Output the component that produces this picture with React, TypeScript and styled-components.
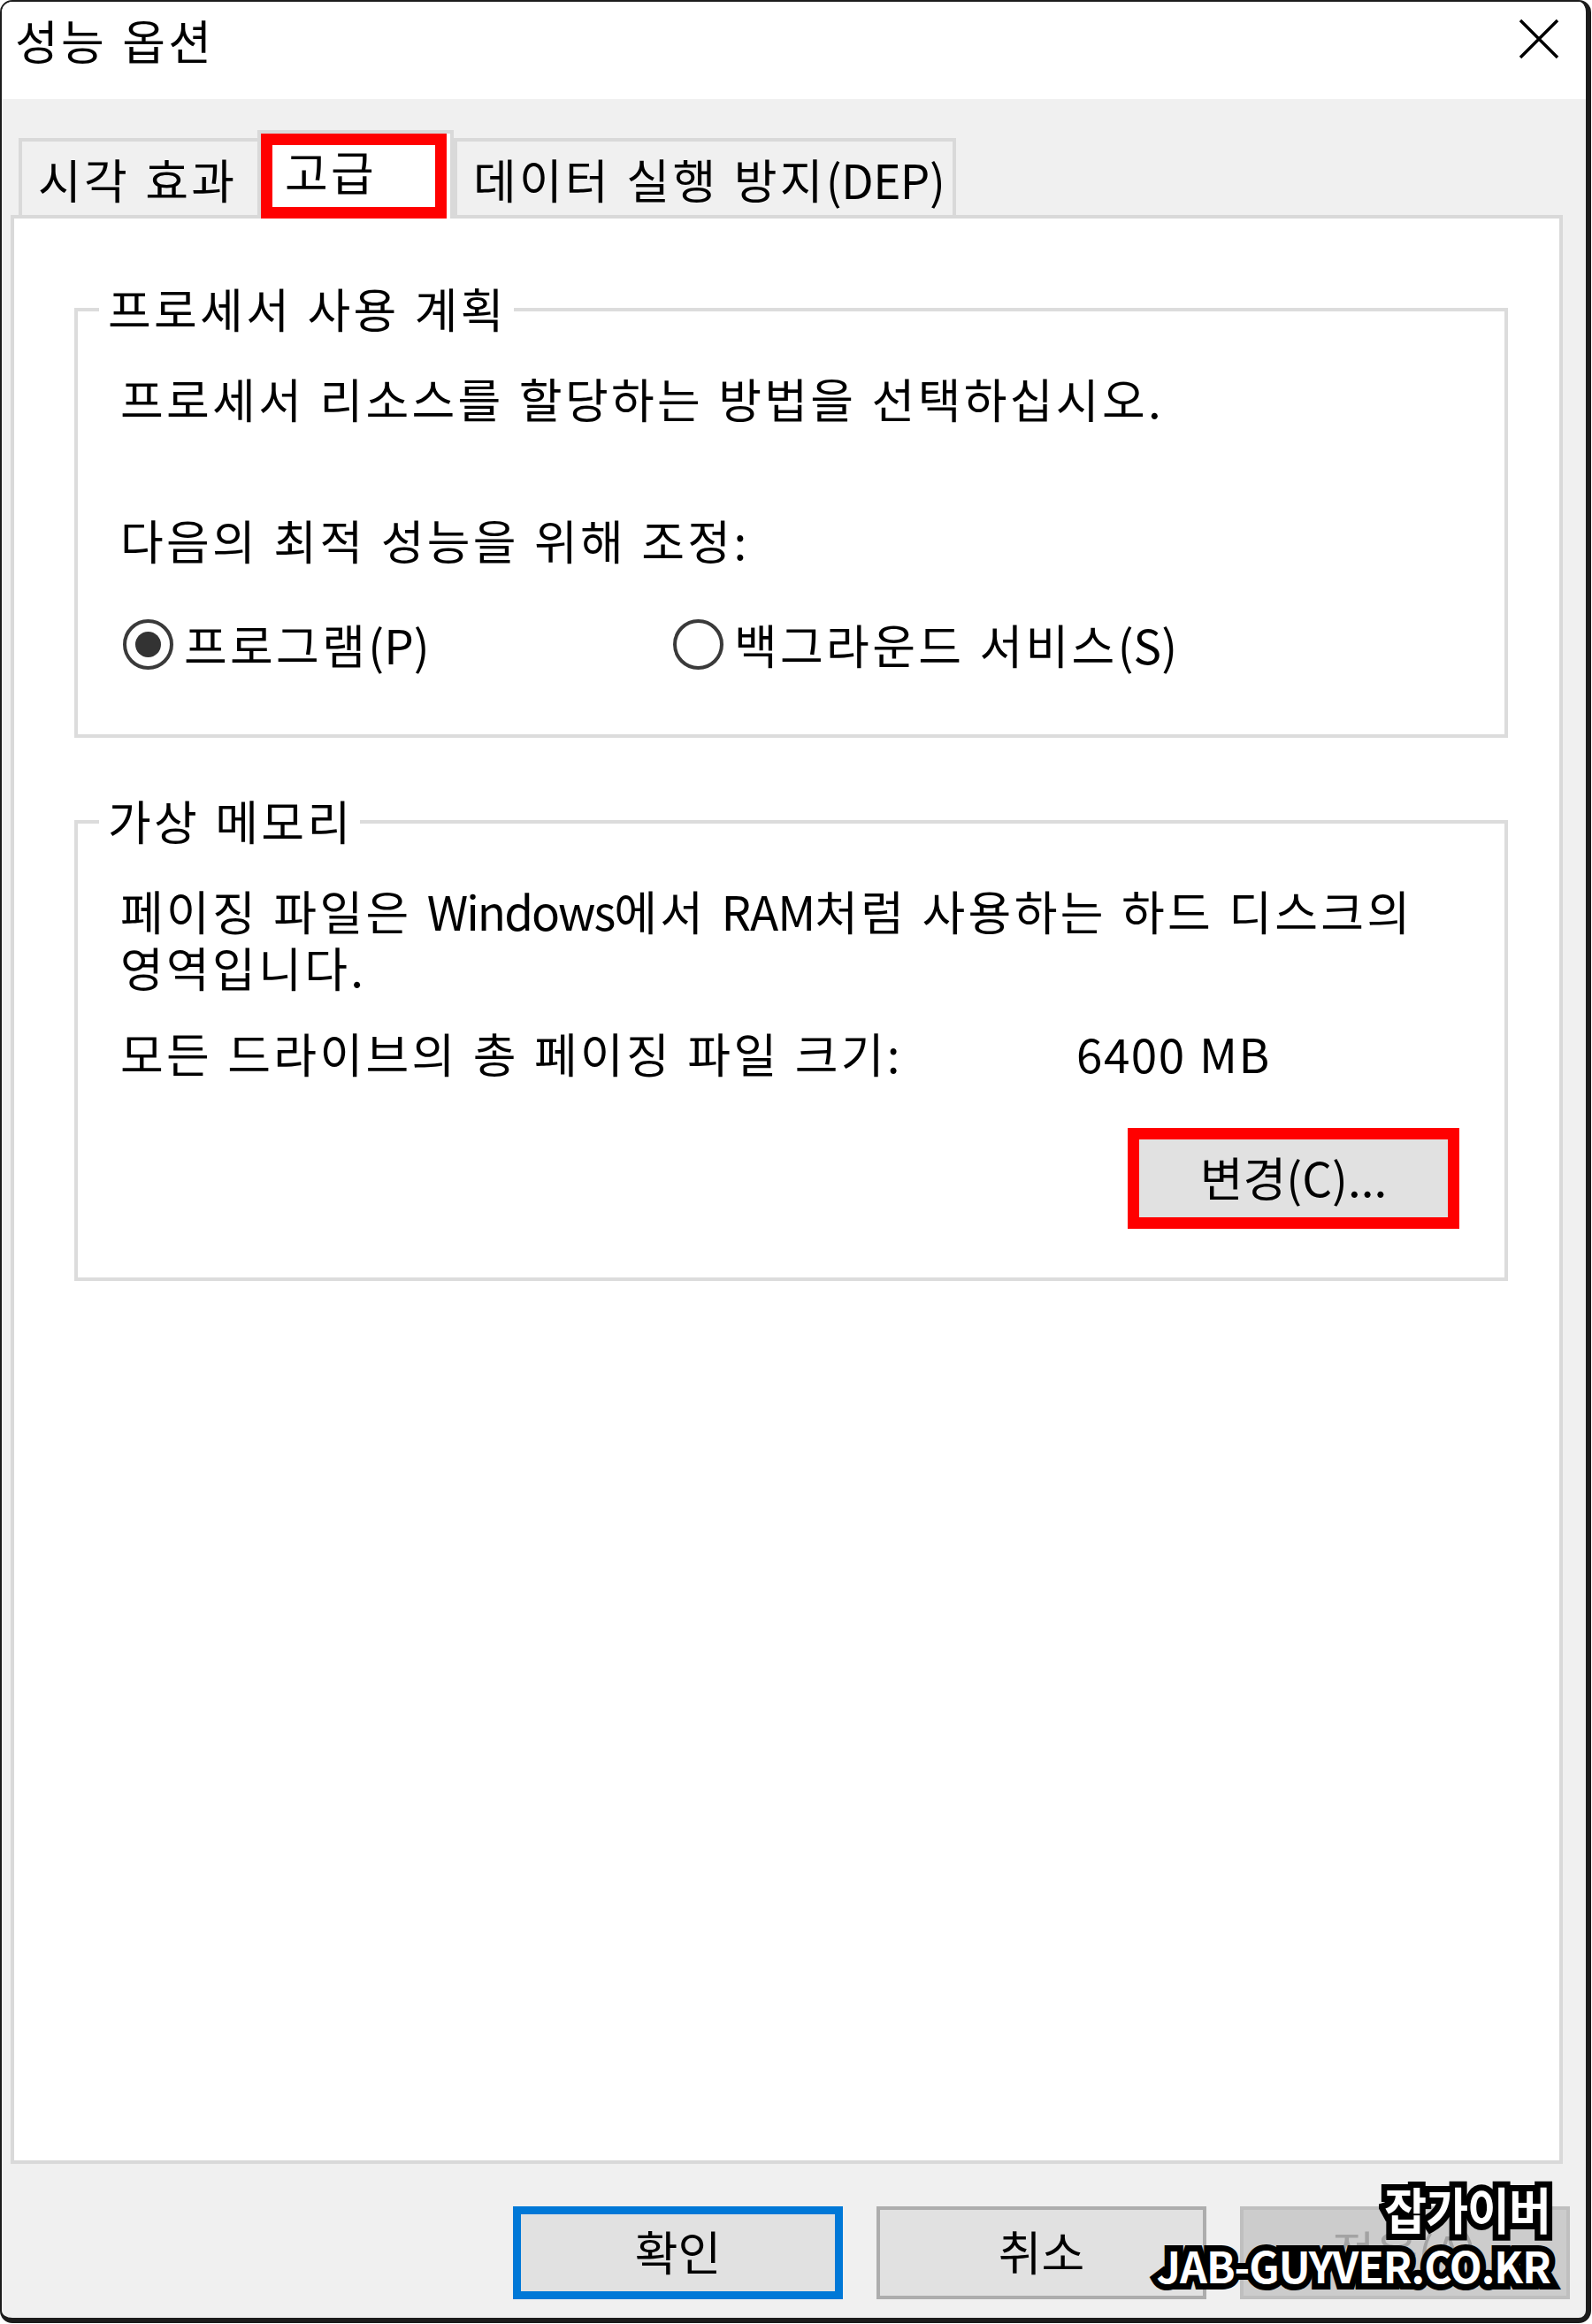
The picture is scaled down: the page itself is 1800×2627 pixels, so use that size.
import React from "react";
import styled, { createGlobalStyle } from "styled-components";

const FONT = `"Noto Sans CJK KR", "Noto Sans", "DejaVu Sans", sans-serif`;

const Global = createGlobalStyle`
  html, body { margin: 0; padding: 0; background: #ffffff; }
  body { font-family: ${FONT}; }
  *, *::before, *::after { box-sizing: border-box; }
`;

const Window = styled.div`
  position: relative;
  width: 1799px;
  height: 2626px;
  display: flex;
  flex-direction: column;
  background: #f0f0f0;
  border: 2px solid #1c1c1c;
  border-right-width: 6px;
  border-bottom-width: 6px;
  border-radius: 14px;
  overflow: hidden;
  font-family: ${FONT};
  font-size: 53px;
  letter-spacing: 3.3px;
  word-spacing: 2px;
  color: #000;
`;

const Latin = styled.span<{ $ls: number }>`
  letter-spacing: ${(p) => p.$ls}px;
`;

const TitleBar = styled.div`
  flex: none;
  height: 110px;
  background: #ffffff;
  display: flex;
  align-items: flex-start;
  justify-content: space-between;
  padding: 0 30px 0 15px;
`;

const Title = styled.div`
  line-height: 86px;
`;

const CloseIcon = styled.svg`
  margin-top: 19px;
  display: block;
`;

const TabStrip = styled.div`
  flex: none;
  height: 131px;
  display: flex;
  align-items: flex-end;
  padding-left: 19px;
  position: relative;
  z-index: 1;
`;

const Tab = styled.div<{ $w: number; $active?: boolean }>`
  position: relative;
  width: ${(p) => p.$w}px;
  height: ${(p) => (p.$active ? 100 : 87)}px;
  margin-left: ${(p) => (p.$active ? -4 : 0)}px;
  margin-bottom: ${(p) => (p.$active ? -4 : 0)}px;
  background: ${(p) => (p.$active ? "#ffffff" : "#f0f0f0")};
  border: 4px solid #d9d9d9;
  border-bottom: none;
  display: flex;
  align-items: center;
  padding-left: ${(p) => (p.$active ? 27 : 18)}px;
  padding-bottom: ${(p) => (p.$active ? 13 : 0)}px;
  white-space: nowrap;
  line-height: 64px;
`;

const Highlight = styled.span<{ $t: number; $r: number; $b: number; $l: number }>`
  position: absolute;
  top: ${(p) => p.$t}px;
  right: ${(p) => p.$r}px;
  bottom: ${(p) => p.$b}px;
  left: ${(p) => p.$l}px;
  border: 13px solid #ff0000;
  pointer-events: none;
`;

const Panel = styled.div`
  flex: 1;
  background: #ffffff;
  border: 4px solid #d9d9d9;
  margin: 0 26px 0 10px;
  padding: 101px 58px 0 68px;
`;

const Group = styled.section<{ $mt?: number }>`
  position: relative;
  border: 4px solid #dcdcdc;
  margin-top: ${(p) => p.$mt ?? 0}px;
  padding: 66px 52px 0 48px;
`;

const Legend = styled.span`
  position: absolute;
  top: -36px;
  left: 24px;
  padding: 0 8px 0 10px;
  background: #ffffff;
  line-height: 64px;
  white-space: nowrap;
`;

const Line = styled.p<{ $mt?: number }>`
  margin: ${(p) => p.$mt ?? 0}px 0 0 0;
  line-height: 64px;
  white-space: nowrap;
`;

const Para = styled.p`
  margin: 0;
  line-height: 64px;
  white-space: nowrap;
`;

const RadioRow = styled.div`
  display: grid;
  grid-template-columns: 622px auto;
  margin-top: 54px;
  height: 64px;
  align-items: center;
  padding-bottom: 70px;
  box-sizing: content-box;
`;

const RadioLabel = styled.label`
  display: flex;
  align-items: center;
  gap: 12px;
  padding-left: 3px;
  line-height: 64px;
  white-space: nowrap;
`;

const RadioCircle = styled.span<{ $checked?: boolean }>`
  flex: none;
  width: 57px;
  height: 57px;
  border-radius: 50%;
  border: 4px solid #3a3a3a;
  background: #ffffff;
  display: inline-flex;
  align-items: center;
  justify-content: center;
  &::after {
    content: "";
    width: 29px;
    height: 29px;
    border-radius: 50%;
    background: ${(p) => (p.$checked ? "#333333" : "transparent")};
  }
`;

const SizeRow = styled.div`
  display: grid;
  grid-template-columns: 1081px auto;
  margin-top: 33px;
  line-height: 64px;
  white-space: nowrap;
`;

const ChangeRow = styled.div`
  display: flex;
  justify-content: flex-end;
  margin-top: 58px;
  padding-bottom: 59px;
`;

const Button = styled.button<{ $variant?: "focus" | "disabled" }>`
  position: relative;
  width: 373px;
  height: 105px;
  padding: 0 0 6px 0;
  font-family: ${FONT};
  font-size: 53px;
  letter-spacing: 0;
  word-spacing: 0;
  line-height: 64px;
  display: flex;
  align-items: center;
  justify-content: center;
  white-space: nowrap;
  background: ${(p) => (p.$variant === "disabled" ? "#cccccc" : "#e1e1e1")};
  color: ${(p) => (p.$variant === "disabled" ? "#a3a3a3" : "#000000")};
  border: ${(p) =>
    p.$variant === "focus"
      ? "9px solid #0078d7"
      : p.$variant === "disabled"
      ? "4px solid #bfbfbf"
      : "4px solid #adadad"};
  border-radius: 0;
`;

const Footer = styled.div`
  flex: none;
  height: 174px;
  display: flex;
  justify-content: flex-end;
  align-items: flex-start;
  gap: 38px;
  padding: 48px 18px 0 0;
`;

const Watermark = styled.div`
  position: absolute;
  right: 40px;
  bottom: 28px;
  display: flex;
  flex-direction: column;
  align-items: flex-end;
  pointer-events: none;
`;

const MarkLine = styled.span<{ $size: number; $sx: number }>`
  display: block;
  font-family: ${FONT};
  font-weight: 700;
  font-size: ${(p) => p.$size}px;
  line-height: 64px;
  color: #ffffff;
  -webkit-text-stroke: 14px #000000;
  paint-order: stroke fill;
  transform: scaleX(${(p) => p.$sx});
  transform-origin: right center;
  white-space: nowrap;
  letter-spacing: -1px;
  word-spacing: 0;
`;

export default function App() {
  return (
    <>
      <Global />
      <Window>
        <TitleBar>
          <Title>성능 옵션</Title>
          <CloseIcon width="46" height="46" viewBox="0 0 46 46">
            <path d="M2 2 L44 44 M44 2 L2 44" stroke="#000" strokeWidth="3.5" fill="none" />
          </CloseIcon>
        </TitleBar>

        <TabStrip>
          <Tab $w={274}>시각 효과</Tab>
          <Tab $w={222} $active>
            고급
            <Highlight $t={0} $r={4} $b={0} $l={0} />
          </Tab>
          <Tab $w={568}>
            데이터 실행 방지<Latin $ls={-0.5}>(DEP)</Latin>
          </Tab>
        </TabStrip>

        <Panel>
          <Group>
            <Legend>프로세서 사용 계획</Legend>
            <Line>프로세서 리소스를 할당하는 방법을 선택하십시오.</Line>
            <Line $mt={96}>다음의 최적 성능을 위해 조정:</Line>
            <RadioRow>
              <RadioLabel>
                <RadioCircle $checked />
                <span>
                  프로그램<Latin $ls={0}>(P)</Latin>
                </span>
              </RadioLabel>
              <RadioLabel>
                <RadioCircle />
                <span>
                  백그라운드 서비스<Latin $ls={0}>(S)</Latin>
                </span>
              </RadioLabel>
            </RadioRow>
          </Group>

          <Group $mt={93}>
            <Legend>가상 메모리</Legend>
            <Para>
              페이징 파일은 <Latin $ls={-2}>Windows</Latin>에서 <Latin $ls={-1}>RAM</Latin>처럼 사용하는 하드 디스크의
              <br />
              영역입니다.
            </Para>
            <SizeRow>
              <span>모든 드라이브의 총 페이징 파일 크기:</span>
              <Latin $ls={1.5}>6400 MB</Latin>
            </SizeRow>
            <ChangeRow>
              <Button>
                변경(C)...
                <Highlight $t={-9} $r={-5} $b={-8} $l={-5} />
              </Button>
            </ChangeRow>
          </Group>
        </Panel>

        <Footer>
          <Button $variant="focus">확인</Button>
          <Button>취소</Button>
          <Button $variant="disabled">적용(A)</Button>
        </Footer>

        <Watermark>
          <MarkLine $size={56} $sx={0.93}>잡가이버</MarkLine>
          <MarkLine $size={48} $sx={1}>JAB-GUYVER.CO.KR</MarkLine>
        </Watermark>
      </Window>
    </>
  );
}
